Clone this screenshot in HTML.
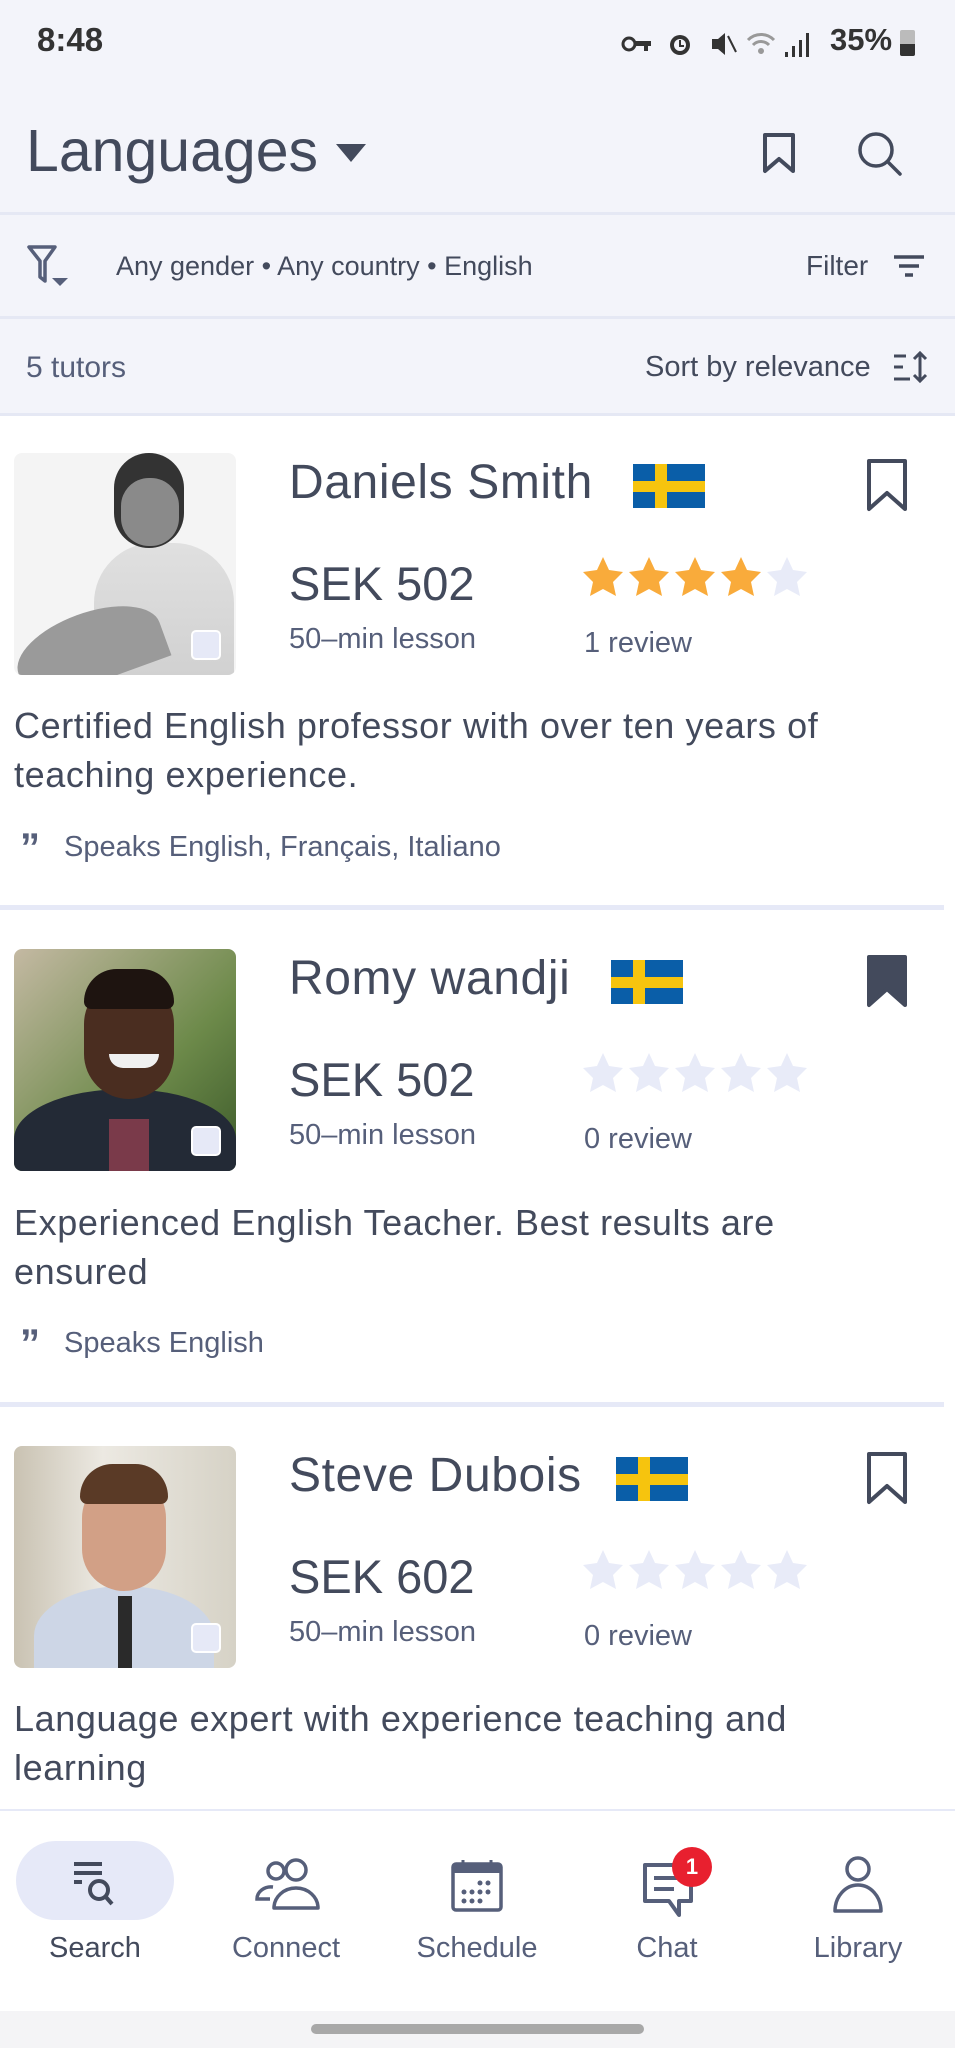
<!DOCTYPE html>
<html><head><meta charset="utf-8"><style>
*{margin:0;padding:0;box-sizing:border-box}
body{width:955px;height:2048px;position:relative;background:#fff;font-family:"Liberation Sans",sans-serif;color:#434a5c;overflow:hidden}
.a{position:absolute;white-space:nowrap}
.top{position:absolute;left:0;top:0;width:955px;height:415px;background:#f3f4fa}
.hr{position:absolute;left:0;width:955px;height:3px;background:#e5e8f4}
.name{font-size:48px;letter-spacing:0.6px;color:#434a5c}
.price{font-size:47px;color:#434a5c}
.sub{font-size:29px;color:#565f7a}
.desc{font-size:36px;letter-spacing:0.6px;line-height:49px;color:#434a5c}
.speaks{font-size:29px;color:#565f7a}
.photo{position:absolute;left:14px;width:222px;height:222px;border-radius:8px;overflow:hidden}
.sq{position:absolute;left:177px;top:177px;width:30px;height:30px;border-radius:5px;background:#e6e9f7;border:2px solid #fff}
.flag{position:absolute;width:72px;height:44px;background:#0a5ea8}
.flag:before{content:"";position:absolute;left:22px;top:0;width:12px;height:44px;background:#f6c40e}
.flag:after{content:"";position:absolute;left:0;top:17px;width:72px;height:11px;background:#f6c40e}
.div{position:absolute;left:0;width:944px;height:5px;background:#e6e9f7}
.lbl{position:absolute;top:1932px;font-size:29px;color:#565f7a;width:170px;text-align:center}
</style></head><body>
<div class="top"></div>
<div class="a" style="left:37px;top:21px;font-size:33px;font-weight:bold;color:#333">8:48</div>
<svg class="a" style="left:620px;top:28px" width="215" height="32" viewBox="0 0 215 32" fill="#333">
<circle cx="9" cy="16" r="6" fill="none" stroke="#333" stroke-width="3"/><rect x="14" y="13" width="17" height="5"/><rect x="24" y="16" width="4" height="7"/>
<circle cx="60" cy="17" r="10"/><circle cx="60" cy="17" r="6" fill="#f3f4fa"/><path d="M60 12v6h4" stroke="#333" stroke-width="2" fill="none"/>
<path d="M92 11h6l7-6v22l-7-6h-6z"/><path d="M108 8l8 16" stroke="#333" stroke-width="2"/>
<path d="M128 12a18 18 0 0 1 26 0" stroke="#999" stroke-width="3" fill="none"/><path d="M133 17a11 11 0 0 1 16 0" stroke="#999" stroke-width="3" fill="none"/><circle cx="141" cy="23" r="3" fill="#999"/>
<rect x="165" y="24" width="3" height="5"/><rect x="172" y="18" width="3" height="11"/><rect x="179" y="12" width="3" height="17"/><rect x="186" y="5" width="3" height="24"/>
</svg>
<div class="a" style="left:830px;top:22px;font-size:31px;font-weight:bold;color:#333">35%</div>
<div class="a" style="left:900px;top:30px;width:15px;height:26px;background:#bbb;border-radius:2px"></div>
<div class="a" style="left:900px;top:44px;width:15px;height:12px;background:#333;border-radius:0 0 2px 2px"></div>

<div class="a" style="left:26px;top:117px;font-size:59px;color:#434a5c">Languages</div>
<svg class="a" style="left:336px;top:144px" width="30" height="20"><path d="M0 0h30L15 18z" fill="#434a5c"/></svg>
<svg class="a" style="left:762px;top:132px" width="36" height="44"><path d="M3 3h28v36l-14-12-14 12z" fill="none" stroke="#434a5c" stroke-width="4" stroke-linejoin="round"/></svg>
<svg class="a" style="left:856px;top:130px" width="48" height="48"><circle cx="20" cy="20" r="16" fill="none" stroke="#434a5c" stroke-width="3.5"/><path d="M32 32l12 12" stroke="#434a5c" stroke-width="3.5" stroke-linecap="round"/></svg>
<div class="hr" style="top:212px"></div>

<svg class="a" style="left:26px;top:244px" width="48" height="44"><path d="M3 3h26l-10 14v20l-5-4V17z" fill="none" stroke="#565f7a" stroke-width="3.5" stroke-linejoin="round"/><path d="M26 34h16l-8 8z" fill="#565f7a"/></svg>
<div class="a" style="left:116px;top:251px;font-size:27px;color:#434a5c">Any gender • Any country • English</div>
<div class="a" style="left:806px;top:250px;font-size:28px;color:#434a5c">Filter</div>
<svg class="a" style="left:893px;top:254px" width="32" height="26"><path d="M1 3h30M6 12h20M12 21h8" stroke="#434a5c" stroke-width="3.5"/></svg>
<div class="hr" style="top:316px"></div>
<div class="a" style="left:26px;top:351px;font-size:30px;color:#565f7a">5 tutors</div>
<div class="a" style="left:645px;top:351px;font-size:29px;color:#434a5c">Sort by relevance</div>
<svg class="a" style="left:892px;top:351px" width="36" height="34"><path d="M2 5h12M2 16h9M2 28h16" stroke="#434a5c" stroke-width="3"/><path d="M28 2v28M22 8l6-6 6 6M22 24l6 6 6-6" stroke="#434a5c" stroke-width="3" fill="none"/></svg>
<div class="hr" style="top:413px"></div>

<!-- Card 1 -->
<div class="photo" style="top:453px;background:#f4f4f4">
 <div class="a" style="left:80px;top:90px;width:140px;height:150px;border-radius:60px 60px 0 0;background:linear-gradient(#e0e0e0,#cfcfcf)"></div>
 <div class="a" style="left:0;top:160px;width:150px;height:70px;border-radius:50% 50% 0 0;background:#9a9a9a;transform:rotate(-20deg)"></div>
 <div class="a" style="left:100px;top:0;width:70px;height:95px;border-radius:40px;background:#333"></div>
 <div class="a" style="left:107px;top:25px;width:58px;height:68px;border-radius:28px;background:#8a8a8a"></div>
 <div class="sq"></div>
</div>
<div class="a name" style="left:289px;top:455px">Daniels Smith</div>
<div class="flag" style="left:633px;top:464px"></div>
<svg class="a" style="left:866px;top:458px" width="42" height="54"><path d="M3 3h36v48l-18-16-18 16z" fill="none" stroke="#434a5c" stroke-width="4" stroke-linejoin="round"/></svg>
<div class="a price" style="left:289px;top:556px">SEK 502</div>
<svg class="a" style="left:582px;top:555px" width="230" height="46" viewBox="0 0 230 46">
<defs><path id="st" d="M21 2l6 13 14 2-10 10 3 14-13-7-13 7 3-14L1 17l14-2z"/></defs>
<use href="#st" x="0" fill="#f9ab3b"/><use href="#st" x="46" fill="#f9ab3b"/><use href="#st" x="92" fill="#f9ab3b"/><use href="#st" x="138" fill="#f9ab3b"/><use href="#st" x="184" fill="#e8ebf8"/></svg>
<div class="a sub" style="left:289px;top:623px">50–min lesson</div>
<div class="a sub" style="left:584px;top:627px">1 review</div>
<div class="a desc" style="left:14px;top:701px">Certified English professor with over ten years of<br>teaching experience.</div>
<div class="a" style="left:20px;top:826px;font-size:40px;font-weight:bold;color:#565f7a;letter-spacing:-4px">”</div>
<div class="a speaks" style="left:64px;top:831px">Speaks English, Français, Italiano</div>
<div class="div" style="top:905px"></div>

<!-- Card 2 -->
<div class="photo" style="top:949px;background:linear-gradient(135deg,#c4b9a3,#6d8a4a 60%,#3c5a2a)">
 <div class="a" style="left:0;top:140px;width:222px;height:100px;border-radius:50% 50% 0 0;background:#232a36"></div>
 <div class="a" style="left:70px;top:30px;width:90px;height:120px;border-radius:45px;background:#4a2d20"></div>
 <div class="a" style="left:70px;top:20px;width:90px;height:40px;border-radius:45px 45px 10px 10px;background:#1e1410"></div>
 <div class="a" style="left:95px;top:105px;width:50px;height:14px;border-radius:0 0 20px 20px;background:#f0f0f0"></div>
 <div class="a" style="left:95px;top:170px;width:40px;height:60px;background:#7a3a4a"></div>
 <div class="sq"></div>
</div>
<div class="a name" style="left:289px;top:951px">Romy wandji</div>
<div class="flag" style="left:611px;top:960px"></div>
<svg class="a" style="left:866px;top:954px" width="42" height="54"><path d="M3 3h36v48l-18-16-18 16z" fill="#434a5c" stroke="#434a5c" stroke-width="4" stroke-linejoin="round"/></svg>
<div class="a price" style="left:289px;top:1052px">SEK 502</div>
<svg class="a" style="left:582px;top:1051px" width="230" height="46" viewBox="0 0 230 46">
<use href="#st" x="0" fill="#e8ebf8"/><use href="#st" x="46" fill="#e8ebf8"/><use href="#st" x="92" fill="#e8ebf8"/><use href="#st" x="138" fill="#e8ebf8"/><use href="#st" x="184" fill="#e8ebf8"/></svg>
<div class="a sub" style="left:289px;top:1119px">50–min lesson</div>
<div class="a sub" style="left:584px;top:1123px">0 review</div>
<div class="a desc" style="left:14px;top:1198px">Experienced English Teacher. Best results are<br>ensured</div>
<div class="a" style="left:20px;top:1322px;font-size:40px;font-weight:bold;color:#565f7a;letter-spacing:-4px">”</div>
<div class="a speaks" style="left:64px;top:1327px">Speaks English</div>
<div class="div" style="top:1402px"></div>

<!-- Card 3 -->
<div class="photo" style="top:1446px;background:linear-gradient(90deg,#c9c2b2,#ece9e2 40%,#d6d2c6)">
 <div class="a" style="left:20px;top:140px;width:180px;height:100px;border-radius:50% 50% 0 0;background:#cdd6e6"></div>
 <div class="a" style="left:104px;top:150px;width:14px;height:80px;background:#2a2a2a"></div>
 <div class="a" style="left:68px;top:30px;width:84px;height:115px;border-radius:42px;background:#d2a086"></div>
 <div class="a" style="left:66px;top:18px;width:88px;height:40px;border-radius:44px 44px 10px 10px;background:#5a3a26"></div>
 <div class="sq"></div>
</div>
<div class="a name" style="left:289px;top:1448px">Steve Dubois</div>
<div class="flag" style="left:616px;top:1457px"></div>
<svg class="a" style="left:866px;top:1451px" width="42" height="54"><path d="M3 3h36v48l-18-16-18 16z" fill="none" stroke="#434a5c" stroke-width="4" stroke-linejoin="round"/></svg>
<div class="a price" style="left:289px;top:1549px">SEK 602</div>
<svg class="a" style="left:582px;top:1548px" width="230" height="46" viewBox="0 0 230 46">
<use href="#st" x="0" fill="#e8ebf8"/><use href="#st" x="46" fill="#e8ebf8"/><use href="#st" x="92" fill="#e8ebf8"/><use href="#st" x="138" fill="#e8ebf8"/><use href="#st" x="184" fill="#e8ebf8"/></svg>
<div class="a sub" style="left:289px;top:1616px">50–min lesson</div>
<div class="a sub" style="left:584px;top:1620px">0 review</div>
<div class="a desc" style="left:14px;top:1694px">Language expert with experience teaching and<br>learning</div>

<!-- bottom nav -->
<div class="a" style="left:0;top:1809px;width:955px;height:202px;background:#fff;border-top:2px solid #e6e9f7"></div>
<div class="a" style="left:16px;top:1841px;width:158px;height:79px;border-radius:40px;background:#e6e9f8"></div>
<svg class="a" style="left:70px;top:1860px" width="50" height="50"><path d="M4 4h28M4 13h28M4 22h8" stroke="#434a5c" stroke-width="4"/><circle cx="29" cy="30" r="9" fill="none" stroke="#434a5c" stroke-width="4"/><path d="M35 36l7 8" stroke="#434a5c" stroke-width="4"/></svg>
<svg class="a" style="left:254px;top:1858px" width="66" height="56"><circle cx="22" cy="13" r="8" fill="none" stroke="#565f7a" stroke-width="3.5"/><circle cx="42" cy="12" r="10" fill="none" stroke="#565f7a" stroke-width="3.5"/><path d="M20 50a22 20 0 0 1 44 0z" fill="none" stroke="#565f7a" stroke-width="3.5" stroke-linejoin="round"/><path d="M16 41h-13a14 12 0 0 1 16 -12" fill="none" stroke="#565f7a" stroke-width="3.5"/></svg>
<svg class="a" style="left:450px;top:1858px" width="54" height="56"><rect x="3" y="6" width="48" height="46" rx="3" fill="none" stroke="#565f7a" stroke-width="3.5"/><rect x="3" y="6" width="48" height="9" fill="#565f7a"/><path d="M13 2v6M41 2v6" stroke="#565f7a" stroke-width="3"/><g fill="#565f7a"><circle cx="30" cy="25" r="2.5"/><circle cx="38" cy="25" r="2.5"/><circle cx="14" cy="34" r="2.5"/><circle cx="22" cy="34" r="2.5"/><circle cx="30" cy="34" r="2.5"/><circle cx="38" cy="34" r="2.5"/><circle cx="14" cy="43" r="2.5"/><circle cx="22" cy="43" r="2.5"/><circle cx="30" cy="43" r="2.5"/></g></svg>
<svg class="a" style="left:642px;top:1862px" width="52" height="56"><path d="M3 3h46v36h-12v14l-10-14H3z" fill="none" stroke="#565f7a" stroke-width="4" stroke-linejoin="round"/><path d="M12 16h26M12 27h20" stroke="#565f7a" stroke-width="4"/></svg>
<div class="a" style="left:672px;top:1847px;width:40px;height:40px;border-radius:50%;background:#e8202f;color:#fff;font-size:22px;font-weight:bold;text-align:center;line-height:40px">1</div>
<svg class="a" style="left:832px;top:1854px" width="52" height="60"><circle cx="26" cy="15" r="11" fill="none" stroke="#565f7a" stroke-width="3.5"/><path d="M3 57a23 26 0 0 1 46 0z" fill="none" stroke="#565f7a" stroke-width="3.5" stroke-linejoin="round"/></svg>
<div class="lbl" style="left:10px;color:#434a5c">Search</div>
<div class="lbl" style="left:201px">Connect</div>
<div class="lbl" style="left:392px">Schedule</div>
<div class="lbl" style="left:582px">Chat</div>
<div class="lbl" style="left:773px">Library</div>
<div class="a" style="left:0;top:2011px;width:955px;height:37px;background:#f4f4f6"></div>
<div class="a" style="left:311px;top:2024px;width:333px;height:10px;border-radius:5px;background:#a8a8a8"></div>
</body></html>
